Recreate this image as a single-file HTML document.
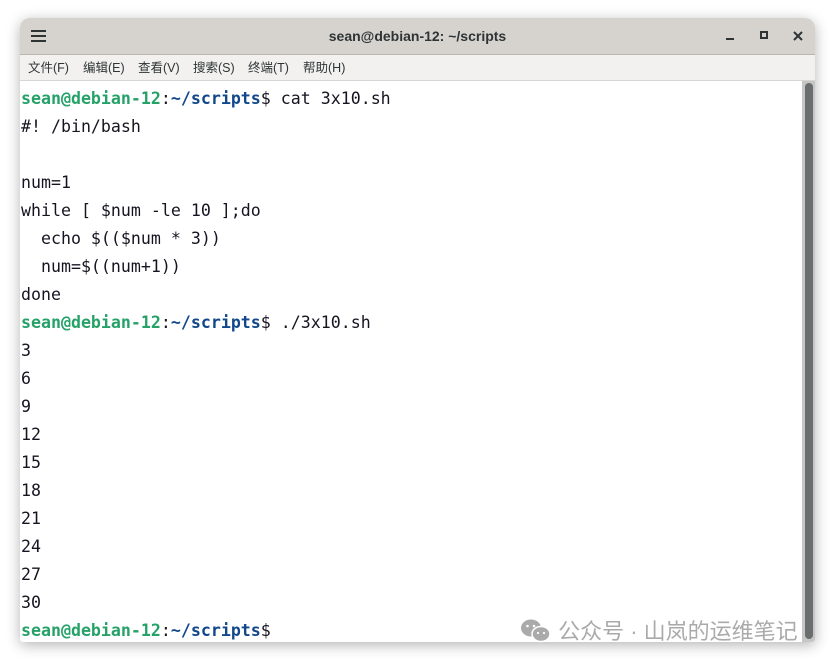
<!DOCTYPE html>
<html><head><meta charset="utf-8"><style>
html,body{margin:0;padding:0;width:834px;height:662px;background:#fff;overflow:hidden;position:relative}
.win{position:absolute;left:20px;top:18px;width:795px;height:624px;border-radius:10px 10px 3px 3px;box-shadow:0 3px 14px rgba(0,0,0,.3);overflow:hidden;background:#fff}
.title{position:absolute;left:0;top:0;width:795px;height:36px;background:#d6d3cf;border-bottom:1px solid #bab5ad;font:bold 14px "Liberation Sans","DejaVu Sans",sans-serif;color:#2e3436;text-align:center;line-height:37px}
.menu{position:absolute;left:0;top:37px;width:795px;height:25px;background:#f2f1ef;border-bottom:1px solid #d8d6d3;font:12.5px "Liberation Sans","Noto Sans CJK SC",sans-serif;color:#2e3436;line-height:27px}
.menu span{position:absolute}
.term{position:absolute;left:1px;top:67px;font:16.6px/28px "DejaVu Sans Mono",monospace;color:#171421;white-space:pre}
.g{color:#26a269;font-weight:bold}.b{color:#12488b;font-weight:bold}
.sb{position:absolute;left:782px;top:63px;width:13px;height:561px;background:#c6c6c6}
.th{position:absolute;left:3px;top:2px;width:8px;height:556px;background:#6b6e6e;border-radius:4px}
.wm{position:absolute;left:520px;top:614px;font:22px "Liberation Sans","Noto Sans CJK SC",sans-serif;color:#aaa;white-space:nowrap}
.x{position:absolute;left:772px;top:12px;width:12px;height:12px}
</style></head><body>
<div class="win">
<div class="title">sean@debian-12: ~/scripts
<div style="position:absolute;left:11px;top:12px;width:15px;height:2px;background:#2e3436;box-shadow:0 5px 0 #2e3436,0 10px 0 #2e3436"></div>
<div style="position:absolute;left:706px;top:20px;width:8px;height:2px;background:#2e3436"></div>
<div style="position:absolute;left:740px;top:13px;width:4px;height:4px;border:2px solid #2e3436"></div>
<svg class="x" viewBox="0 0 12 12"><path d="M2 2L10 10M10 2L2 10" stroke="#2e3436" stroke-width="2"/></svg>
</div>
<div class="menu"><span style="left:8px">文件(F)</span><span style="left:63px">编辑(E)</span><span style="left:118px">查看(V)</span><span style="left:173px">搜索(S)</span><span style="left:228px">终端(T)</span><span style="left:283px">帮助(H)</span></div>
<div class="term"><span class="g">sean@debian-12</span>:<span class="b">~/scripts</span>$ cat 3x10.sh
#! /bin/bash

num=1
while [ $num -le 10 ];do
  echo $(($num * 3))
  num=$((num+1))
done
<span class="g">sean@debian-12</span>:<span class="b">~/scripts</span>$ ./3x10.sh
3
6
9
12
15
18
21
24
27
30
<span class="g">sean@debian-12</span>:<span class="b">~/scripts</span>$ </div>
<div class="sb"><div class="th"></div></div>
</div>
<div class="wm"><svg width="32" height="26" viewBox="0 0 32 26" style="vertical-align:-5px"><ellipse cx="11" cy="10" rx="10" ry="8.5" fill="#aaa"/><ellipse cx="21" cy="16" rx="9" ry="7.5" fill="#aaa" stroke="#fff" stroke-width="1.5"/><circle cx="7.5" cy="8" r="1.3" fill="#fff"/><circle cx="14" cy="8" r="1.3" fill="#fff"/><circle cx="18" cy="15" r="1.1" fill="#fff"/><circle cx="24" cy="15" r="1.1" fill="#fff"/></svg> 公众号 · 山岚的运维笔记</div>
</body></html>
